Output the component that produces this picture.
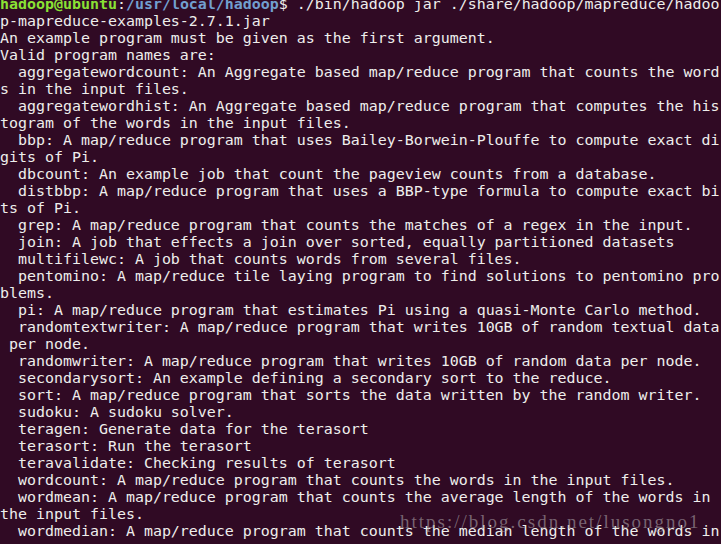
const lines = [
  "p-mapreduce-examples-2.7.1.jar",
  "An example program must be given as the first argument.",
  "Valid program names are:",
  "  aggregatewordcount: An Aggregate based map/reduce program that counts the word",
  "s in the input files.",
  "  aggregatewordhist: An Aggregate based map/reduce program that computes the his",
  "togram of the words in the input files.",
  "  bbp: A map/reduce program that uses Bailey-Borwein-Plouffe to compute exact di",
  "gits of Pi.",
  "  dbcount: An example job that count the pageview counts from a database.",
  "  distbbp: A map/reduce program that uses a BBP-type formula to compute exact bi",
  "ts of Pi.",
  "  grep: A map/reduce program that counts the matches of a regex in the input.",
  "  join: A job that effects a join over sorted, equally partitioned datasets",
  "  multifilewc: A job that counts words from several files.",
  "  pentomino: A map/reduce tile laying program to find solutions to pentomino pro",
  "blems.",
  "  pi: A map/reduce program that estimates Pi using a quasi-Monte Carlo method.",
  "  randomtextwriter: A map/reduce program that writes 10GB of random textual data",
  " per node.",
  "  randomwriter: A map/reduce program that writes 10GB of random data per node.",
  "  secondarysort: An example defining a secondary sort to the reduce.",
  "  sort: A map/reduce program that sorts the data written by the random writer.",
  "  sudoku: A sudoku solver.",
  "  teragen: Generate data for the terasort",
  "  terasort: Run the terasort",
  "  teravalidate: Checking results of terasort",
  "  wordcount: A map/reduce program that counts the words in the input files.",
  "  wordmean: A map/reduce program that counts the average length of the words in",
  "the input files.",
  "  wordmedian: A map/reduce program that counts the median length of the words in",
];

export default function App() {
  return (
    <div className="relative w-[721px] h-[544px] overflow-hidden bg-[#300a24]">
      <div className="-mt-[4px] font-['DejaVu_Sans_Mono',monospace] text-[14.95px] leading-[17px] text-[#eeeeec] whitespace-pre">
        <div>
          <span className="font-bold text-[#8ae234]">hadoop@ubuntu</span>
          <span>:</span>
          <span className="font-bold text-[#729fcf]">/usr/local/hadoop</span>
          <span>$ ./bin/hadoop jar ./share/hadoop/mapreduce/hadoo</span>
        </div>
        {lines.map((l, i) => (
          <div key={i}>{l}</div>
        ))}
      </div>
      {/* csdn watermark */}
      <div className="absolute left-[400px] top-[508px] font-['Liberation_Serif',serif] text-[19px] tracking-[2px] text-[#a8a0a6]/60 whitespace-pre">
        https://blog.csdn.net/lusongno1
      </div>
    </div>
  );
}
